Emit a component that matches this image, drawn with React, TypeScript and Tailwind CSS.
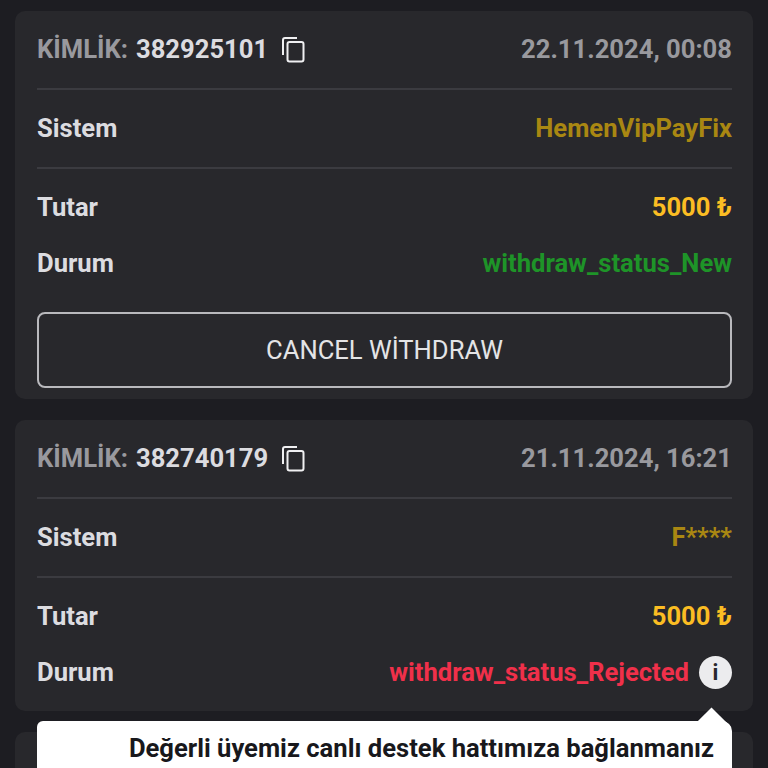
function CopyIcon() {
  return (
    <svg viewBox="0 0 24 27" fill="none" stroke="currentColor" strokeWidth="2" className="h-[27px] w-[24px] text-[#f0f0f2]">
      <path d="M16 2H4a2 2 0 0 0-2 2v15" />
      <rect x="6.5" y="6" width="16" height="19.5" rx="2" />
    </svg>
  );
}

function Card({
  id,
  date,
  system,
  status,
  statusClass,
  info,
  action,
}: {
  id: string;
  date: string;
  system: string;
  status: string;
  statusClass: string;
  info?: boolean;
  action?: boolean;
}) {
  return (
    <div className={`rounded-[10px] bg-[#28282c] pl-[22px] pr-[21px] ${action ? "pb-[11px]" : "pb-[19px]"}`}>
      <div className="flex h-[79px] items-center justify-between border-b-2 border-[#3b3b40]">
        <div className="flex items-center">
          <span className="text-[#99999e]">KİMLİK:</span>
          <span className="ml-[8px] text-[#dcdce0]">{id}</span>
          <span className="ml-[13px]"><CopyIcon /></span>
        </div>
        <span className="text-[#99999e]">{date}</span>
      </div>
      <div className="flex h-[79px] items-center justify-between border-b-2 border-[#3b3b40]">
        <span className="text-[#dcdce0]">Sistem</span>
        <span className="text-[#a98712]">{system}</span>
      </div>
      <div className="flex flex-col gap-[18px] pt-[19px]">
        <div className="flex items-center justify-between">
          <span className="text-[#dcdce0]">Tutar</span>
          <span className="text-[#fbbd23]">5000 ₺</span>
        </div>
        <div className="flex items-center justify-between">
          <span className="text-[#dcdce0]">Durum</span>
          <div className="flex items-center gap-[10px]">
            <span className={statusClass}>{status}</span>
            {info && (
              <span className="flex h-[33px] w-[33px] items-center justify-center rounded-full bg-[#ececee] text-[22px] font-bold text-[#28282c]">
                i
              </span>
            )}
          </div>
        </div>
      </div>
      {action && (
        <button className="mt-[29px] h-[76px] w-full rounded-[8px] border-2 border-[#b9b9bd] font-normal text-[#e4e4e6]">
          CANCEL WİTHDRAW
        </button>
      )}
    </div>
  );
}

export default function App() {
  return (
    <div className="relative h-[768px] overflow-hidden bg-[#1d1d22] px-[15px] pt-[11px] font-['Roboto',sans-serif] text-[25.6px] font-bold">
      <div className="flex flex-col gap-[21px]">
        <Card
          id="382925101"
          date="22.11.2024, 00:08"
          system="HemenVipPayFix"
          status="withdraw_status_New"
          statusClass="text-[#1e9428]"
          action
        />
        <Card
          id="382740179"
          date="21.11.2024, 16:21"
          system="F****"
          status="withdraw_status_Rejected"
          statusClass="text-[#f0304a]"
          info
        />
        <div className="h-[200px] rounded-[10px] bg-[#28282c]" />
      </div>
      {/* tooltip over the rejected row */}
      <div className="absolute left-[37px] top-[721px] w-[695px] rounded-[6px] rounded-tr-[10px] bg-white pr-[18px] pt-[12px] text-right leading-[30px] text-[#18181c]">
        <span className="absolute right-[7px] top-[-8px] h-[27px] w-[27px] rotate-45 bg-white" />
        <p className="relative">Değerli üyemiz canlı destek hattımıza bağlanmanız</p>
        <p className="relative">gerekmektedir.</p>
      </div>
    </div>
  );
}
